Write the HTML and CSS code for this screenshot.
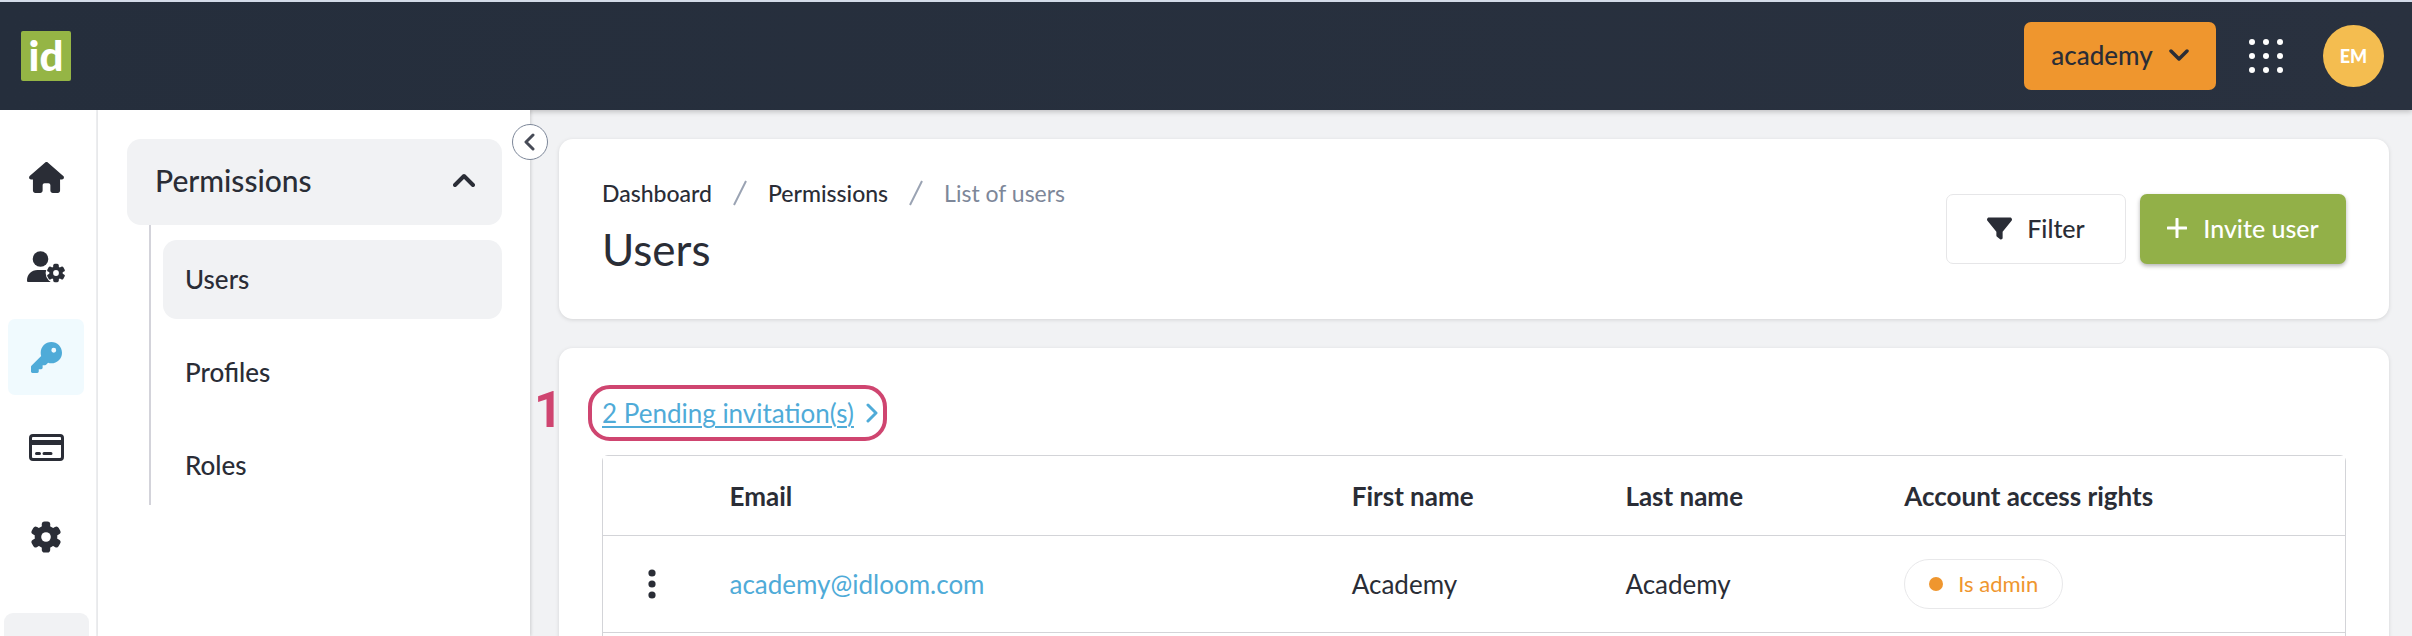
FILE: index.html
```
<!DOCTYPE html>
<html lang="en">
<head>
    <meta charset="UTF-8">
    <meta name="viewport" content="width=device-width, initial-scale=1.0">
    <title>List of users - idloom</title>
    <link rel="stylesheet" href="styles.css">
</head>
<body>
    <header class="topbar">
        <a href="#" class="logo">id</a>
        <div class="topbar-actions">
            <button type="button" class="btn btn-account">
                academy
                <svg class="icon" width="20" height="12" viewBox="0 0 20 12"><path d="M2 2l8 8 8-8" fill="none" stroke="currentColor" stroke-width="3.500" stroke-linecap="round" stroke-linejoin="round"/></svg>
            </button>
            <button type="button" class="apps-btn" aria-label="Applications">
                <svg class="icon" width="34" height="34" viewBox="0 0 34 34" fill="currentColor">
                    <circle cx="3" cy="3" r="3"/><circle cx="17" cy="3" r="3"/><circle cx="31" cy="3" r="3"/>
                    <circle cx="3" cy="17" r="3"/><circle cx="17" cy="17" r="3"/><circle cx="31" cy="17" r="3"/>
                    <circle cx="3" cy="31" r="3"/><circle cx="17" cy="31" r="3"/><circle cx="31" cy="31" r="3"/>
                </svg>
            </button>
            <button type="button" class="avatar">EM</button>
        </div>
    </header>

    <div class="layout">
        <!-- Icon rail -->
        <nav class="rail" aria-label="Main">
            <a href="#" class="rail-item" aria-label="Home">
                <svg class="icon" width="35" height="31" viewBox="0 0 576 512"><path fill="currentColor" d="M575.8 255.5c0 18-15 32.1-32 32.1l-32 0 .7 160.2c0 2.7-.2 5.4-.5 8.1l0 16.2c0 22.1-17.9 40-40 40l-16 0c-1.1 0-2.2 0-3.3-.1c-1.4 .1-2.8 .1-4.2 .1L416 512l-24 0c-22.1 0-40-17.9-40-40l0-24 0-64c0-17.7-14.3-32-32-32l-64 0c-17.7 0-32 14.3-32 32l0 64 0 24c0 22.1-17.9 40-40 40l-24 0-31.9 0c-1.5 0-3-.1-4.5-.2c-1.2 .1-2.4 .2-3.6 .2l-16 0c-22.1 0-40-17.9-40-40l0-112c0-.9 0-1.9 .1-2.8l0-69.7-32 0c-18 0-32-14-32-32.1c0-9 3-17 10-24L266.4 8c7-7 15-8 22-8s15 2 21 7L564.8 231.5c8 7 12 15 11 24z"/></svg>
            </a>
            <a href="#" class="rail-item" aria-label="User settings">
                <svg class="icon" width="38" height="32" viewBox="0 0 38 32">
                    <circle cx="13.5" cy="8" r="7.8" fill="currentColor"/>
                    <path d="M0 29.5C0 23.5 4.500 19 10.500 19H17c2 0 3.500.4 5 1.200V27l5 4H1.500C.6 31 0 30.500 0 29.500z" fill="currentColor"/>
                    <circle cx="29" cy="22" r="10.4" fill="#fff"/>
                    <g fill="currentColor">
                        <rect x="26.200" y="12.800" width="5.600" height="18.400" rx="1.600"/>
                        <rect x="26.200" y="12.800" width="5.600" height="18.400" rx="1.600" transform="rotate(60 29 22)"/>
                        <rect x="26.200" y="12.800" width="5.600" height="18.400" rx="1.600" transform="rotate(120 29 22)"/>
                        <circle cx="29" cy="22" r="6.700"/>
                    </g>
                    <circle cx="29" cy="22" r="2.900" fill="#fff"/>
                </svg>
            </a>
            <a href="#" class="rail-item active" aria-label="Permissions">
                <svg class="icon" width="31" height="31" viewBox="0 0 512 512"><path fill="currentColor" d="M336 352c97.2 0 176-78.8 176-176S433.200 0 336 0S160 78.800 160 176c0 18.700 2.900 36.800 8.300 53.700L7 391c-4.500 4.500-7 10.600-7 17v80c0 13.300 10.700 24 24 24h80c13.300 0 24-10.700 24-24V448h40c13.300 0 24-10.700 24-24V384h40c6.400 0 12.500-2.500 17-7l33.300-33.300c16.900 5.400 35 8.300 53.700 8.300zM376 96a40 40 0 1 1 0 80 40 40 0 1 1 0-80z"/></svg>
            </a>
            <a href="#" class="rail-item" aria-label="Billing">
                <svg class="icon" width="35" height="27" viewBox="0 0 35 27">
                    <rect x="1.500" y="1.500" width="32" height="24" rx="2.500" fill="none" stroke="currentColor" stroke-width="3"/>
                    <path d="M2 6h31v5H2z" fill="currentColor"/>
                    <path d="M7.500 19.500h3M15 19.500h7" stroke="currentColor" stroke-width="3" stroke-linecap="round"/>
                </svg>
            </a>
            <a href="#" class="rail-item" aria-label="Settings">
                <svg class="icon" width="32" height="32" viewBox="0 0 32 32">
                    <g fill="currentColor">
                        <rect x="11.800" y="0.500" width="8.400" height="31" rx="2.800"/>
                        <rect x="11.800" y="0.500" width="8.400" height="31" rx="2.800" transform="rotate(60 16 16)"/>
                        <rect x="11.800" y="0.500" width="8.400" height="31" rx="2.800" transform="rotate(120 16 16)"/>
                        <circle cx="16" cy="16" r="11.300"/>
                    </g>
                    <circle cx="16" cy="16" r="4.800" fill="#fff"/>
                </svg>
            </a>
            <div class="rail-footer"></div>
        </nav>

        <!-- Section menu -->
        <aside class="sidebar">
            <button type="button" class="collapse-btn" aria-label="Collapse menu">
                <svg class="icon" width="11" height="18" viewBox="0 0 11 18"><path d="M9 2L2 9l7 7" fill="none" stroke="currentColor" stroke-width="3" stroke-linecap="round" stroke-linejoin="round"/></svg>
            </button>
            <button type="button" class="menu-title" aria-expanded="true">
                Permissions
                <svg class="icon" width="22" height="14" viewBox="0 0 22 14"><path d="M2 12l9-9 9 9" fill="none" stroke="currentColor" stroke-width="4" stroke-linecap="round" stroke-linejoin="round"/></svg>
            </button>
            <ul class="menu-list">
                <li><a href="#" class="menu-link active">Users</a></li>
                <li><a href="#" class="menu-link">Profiles</a></li>
                <li><a href="#" class="menu-link">Roles</a></li>
            </ul>
        </aside>

        <main class="content">
            <section class="card page-header">
                <div>
                    <nav class="breadcrumb" aria-label="Breadcrumb">
                        <a href="#">Dashboard</a>
                        <svg class="icon" width="14" height="26" viewBox="0 0 14 26"><path d="M1 25L13 1" stroke="currentColor" stroke-width="2"/></svg>
                        <a href="#">Permissions</a>
                        <svg class="icon" width="14" height="26" viewBox="0 0 14 26"><path d="M1 25L13 1" stroke="currentColor" stroke-width="2"/></svg>
                        <span>List of users</span>
                    </nav>
                    <h1 class="page-title">Users</h1>
                </div>
                <div class="page-actions">
                    <button type="button" class="btn btn-filter">
                        <svg class="icon" width="25" height="25" viewBox="0 0 512 512"><path fill="currentColor" d="M3.900 54.900C10.500 40.900 24.500 32 40 32H472c15.500 0 29.500 8.900 36.100 22.900s4.600 30.500-5.200 42.500L320 320.900V448c0 12.100-6.800 23.200-17.700 28.600s-23.800 4.300-33.500-3l-64-48c-8.100-6-12.800-15.500-12.800-25.600V320.900L9 97.300C-.7 85.400-2.800 68.800 3.900 54.900z"/></svg>
                        Filter
                    </button>
                    <button type="button" class="btn btn-invite">
                        <svg class="icon" width="20" height="20" viewBox="0 0 20 20"><path d="M10 1v18M1 10h18" stroke="currentColor" stroke-width="3" stroke-linecap="round"/></svg>
                        Invite user
                    </button>
                </div>
            </section>

            <section class="card users-card">
                <div class="pending">
                    <span class="step-number">1</span>
                    <a href="#" class="pending-link">
                        <span>2 Pending invitation(s)</span>
                        <svg class="icon" width="12" height="20" viewBox="0 0 12 20"><path d="M2 2l8 8-8 8" fill="none" stroke="currentColor" stroke-width="3" stroke-linecap="round" stroke-linejoin="round"/></svg>
                    </a>
                </div>
                <div class="table-wrap">
                    <table class="users-table">
                        <colgroup>
                            <col class="col-menu">
                            <col class="col-email">
                            <col class="col-first">
                            <col class="col-last">
                            <col>
                        </colgroup>
                        <thead>
                            <tr>
                                <th></th>
                                <th>Email</th>
                                <th>First name</th>
                                <th>Last name</th>
                                <th>Account access rights</th>
                            </tr>
                        </thead>
                        <tbody>
                            <tr>
                                <td class="cell-menu">
                                    <button type="button" class="row-menu" aria-label="Row actions">
                                        <svg class="icon" width="8" height="30" viewBox="0 0 8 30" fill="currentColor"><circle cx="4" cy="4" r="3.600"/><circle cx="4" cy="15" r="3.600"/><circle cx="4" cy="26" r="3.600"/></svg>
                                    </button>
                                </td>
                                <td><a href="#">academy@idloom.com</a></td>
                                <td>Academy</td>
                                <td>Academy</td>
                                <td><span class="badge">Is admin</span></td>
                            </tr>
                            <tr>
                                <td></td>
                                <td></td>
                                <td></td>
                                <td></td>
                                <td></td>
                            </tr>
                        </tbody>
                    </table>
                </div>
            </section>
        </main>
    </div>
</body>
</html>
```
FILE: styles.css
```
:root {
    --dark: #2a2d36;
    --bg: #f1f2f4;
    --blue: #4fabd8;
    --green: #92b048;
    --orange: #ef962e;
    --pink: #cf4570;
    --border: #d3d4d8;
}
*, *::before { box-sizing: border-box; }
body {
    display: flex;
    flex-direction: column;
    height: 100vh;
    margin: 0;
    overflow: hidden;
    background-color: var(--bg);
    color: var(--dark);
    font-family: Lato, "Open Sans", sans-serif;
    font-size: 26px;
    line-height: 32px;
}
a { color: inherit; text-decoration: none; }
button {
    padding: 0;
    border: none;
    background: none;
    color: inherit;
    font: inherit;
    cursor: pointer;
}
.icon { display: block; flex: none; }

/* Top bar */
.topbar {
    position: relative;
    z-index: 1;
    flex: none;
    display: flex;
    align-items: center;
    justify-content: space-between;
    height: 110px;
    padding: 0 28px 0 21px;
    border-top: 2px solid #d3dbe8;
    background: linear-gradient(90deg, #252e3c, #29313f);
    box-shadow: 0 2px 5px rgba(0, 0, 0, 0.2);
}
.logo {
    width: 50px;
    height: 50px;
    border-radius: 2px;
    background-color: #95b545;
    color: #fff;
    font-size: 42px;
    font-weight: 900;
    line-height: 48px;
    text-align: center;
}
.topbar-actions { display: flex; align-items: center; }
.btn {
    display: flex;
    align-items: center;
    justify-content: center;
    border-radius: 7px;
    font-size: 25px;
    font-weight: 500;
}
.btn-account {
    gap: 16px;
    width: 192px;
    height: 68px;
    padding-bottom: 2px;
    background-color: var(--orange);
    font-size: 26px;
}
.apps-btn { margin: 0 40px 0 33px; color: #fff; }
.avatar {
    width: 61px;
    height: 62px;
    border-radius: 50%;
    background-color: #f4bd50;
    color: #fff;
    font-size: 18px;
    font-weight: 900;
}

.layout { flex: 1; display: flex; min-height: 0; overflow: hidden; }

/* Rail */
.rail {
    position: relative;
    z-index: 2;
    flex: none;
    display: flex;
    flex-direction: column;
    align-items: center;
    gap: 14px;
    width: 98px;
    padding: 29px 4px 0 0;
    border-right: 2px solid #eeeff1;
    background-color: #fff;
}
.rail-item {
    flex: none;
    display: flex;
    align-items: center;
    justify-content: center;
    width: 76px;
    height: 76px;
    border-radius: 7px;
}
.rail-item.active { background-color: #f0fafe; color: var(--blue); }
.rail-footer {
    flex: none;
    width: 85px;
    height: 76px;
    margin-top: 24px;
    border-radius: 9px;
    background-color: var(--bg);
}

/* Sidebar */
.sidebar {
    position: relative;
    z-index: 2;
    flex: none;
    width: 432px;
    padding: 29px 28px 0 29px;
    background-color: #fff;
    box-shadow: 1px 0 3px rgba(0, 0, 0, 0.15);
}
.collapse-btn {
    position: absolute;
    top: 14px;
    right: -18px;
    display: flex;
    align-items: center;
    justify-content: center;
    width: 36px;
    height: 36px;
    padding-right: 2px;
    border: 1px solid #7d8799;
    border-radius: 50%;
    background-color: #fff;
    color: #474b57;
}
.menu-title {
    display: flex;
    align-items: center;
    justify-content: space-between;
    width: 100%;
    height: 86px;
    padding: 0 27px 4px 28px;
    border-radius: 14px;
    background-color: var(--bg);
    font-size: 30px;
    font-weight: 500;
}
.menu-list {
    display: flex;
    flex-direction: column;
    gap: 14px;
    margin: 0 0 0 22px;
    padding: 15px 0 0 12px;
    border-left: 2px solid #d3d3da;
    list-style: none;
}
.menu-link {
    display: flex;
    align-items: center;
    height: 79px;
    padding: 0 22px 2px;
    border-radius: 14px;
    font-weight: 500;
}
.menu-link.active { background-color: var(--bg); }

/* Content */
.content { flex: 1; min-width: 0; padding: 29px 23px 0 29px; }
.card {
    border-radius: 14px;
    background-color: #fff;
    box-shadow: 0 1px 4px rgba(0, 0, 0, 0.12);
}
.page-header {
    display: flex;
    justify-content: space-between;
    align-items: flex-start;
    height: 180px;
    margin-bottom: 29px;
    padding: 38px 43px 0;
}
.breadcrumb {
    display: flex;
    align-items: center;
    gap: 21px;
    font-size: 23px;
    font-weight: 500;
}
.breadcrumb .icon { color: #9aa3b3; }
.breadcrumb span { color: #7d8799; font-weight: 400; }
.page-title {
    margin: 12px 0 0;
    font-size: 44px;
    font-weight: 400;
    line-height: 56px;
}
.page-actions { display: flex; gap: 14px; padding-top: 17px; }
.btn-filter {
    gap: 15px;
    width: 180px;
    height: 70px;
    padding-bottom: 2px;
    border: 1px solid #e6e6e8;
    background-color: #fff;
}
.btn-invite {
    gap: 16px;
    width: 206px;
    height: 70px;
    padding-bottom: 2px;
    background-color: var(--green);
    box-shadow: 0 2px 4px rgba(0, 0, 0, 0.3);
    color: #fff;
}

.users-card { padding: 37px 43px 43px; }
.pending { position: relative; display: flex; margin-bottom: 14px; }
.pending-link {
    display: flex;
    align-items: center;
    gap: 12px;
    height: 56px;
    color: var(--blue);
}
.pending-link span {
    text-decoration: underline;
    text-decoration-thickness: 2px;
    text-underline-offset: 3px;
}
/* highlight frame around the link */
.pending-link::before {
    content: "";
    position: absolute;
    top: 0;
    left: -14px;
    width: 299px;
    height: 56px;
    border: 4px solid var(--pink);
    border-radius: 22px;
}
.step-number {
    position: absolute;
    top: 0;
    left: -68px;
    color: var(--pink);
    font-family: Roboto, sans-serif;
    font-size: 50px;
    font-weight: 700;
    line-height: 50px;
}

.table-wrap { border-radius: 6px; overflow: hidden; }
.users-table {
    width: 100%;
    border: 1px solid var(--border);
    border-collapse: collapse;
    table-layout: fixed;
}
.col-menu { width: 105px; }
.col-email { width: 35.7%; }
.col-first { width: 15.7%; }
.col-last { width: 16%; }
.users-table th,
.users-table td {
    height: 97px;
    padding: 0 22px;
    border-bottom: 1px solid var(--border);
    text-align: left;
}
.users-table th { height: 80px; font-weight: 700; }
.users-table td a { color: var(--blue); }
.users-table .cell-menu { padding: 0 0 0 45px; }
.row-menu { display: block; }
.badge {
    display: inline-flex;
    align-items: center;
    gap: 15px;
    height: 50px;
    padding: 0 24px;
    border: 1px solid #e8e8ea;
    border-radius: 25px;
    color: var(--orange);
    font-size: 22px;
    vertical-align: middle;
}
.badge::before {
    content: "";
    width: 14px;
    height: 14px;
    border-radius: 50%;
    background-color: var(--orange);
}
```
